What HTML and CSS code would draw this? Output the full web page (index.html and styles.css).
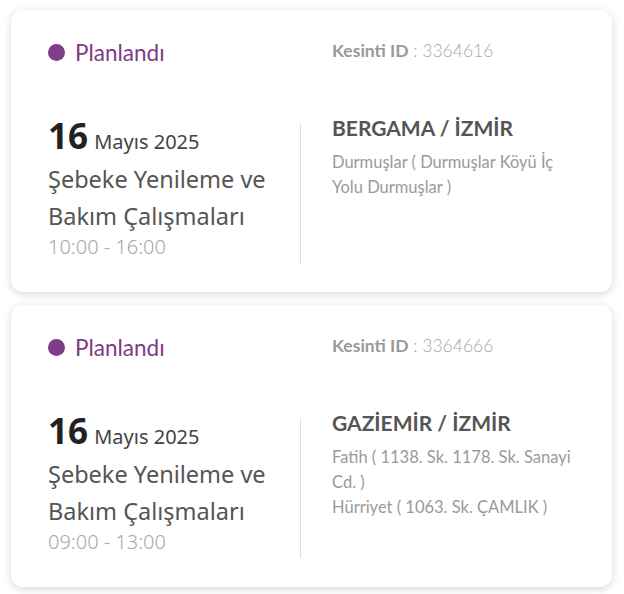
FILE: index.html
```html
<!DOCTYPE html>
<html lang="tr">
<head>
<meta charset="utf-8">
<link rel="stylesheet" href="styles.css">
</head>
<body>
<div class="list">
  <div class="card card-prev"></div>
  <div class="card">
    <div class="top">
      <div class="status"><span class="dot"></span><span class="status-text">Planlandı</span></div>
      <div class="kid"><b>Kesinti ID</b> : 3364616</div>
    </div>
    <div class="body">
      <div class="left">
        <div class="date"><span class="day">16</span> <span class="month">Mayıs 2025</span></div>
        <div class="title">Şebeke Yenileme ve Bakım Çalışmaları</div>
        <div class="time">10:00 - 16:00</div>
      </div>
      <div class="right">
        <div class="place">BERGAMA / İZMİR</div>
        <div class="addr">Durmuşlar ( Durmuşlar Köyü İç Yolu Durmuşlar )</div>
      </div>
    </div>
  </div>
  <div class="card">
    <div class="top">
      <div class="status"><span class="dot"></span><span class="status-text">Planlandı</span></div>
      <div class="kid"><b>Kesinti ID</b> : 3364666</div>
    </div>
    <div class="body">
      <div class="left">
        <div class="date"><span class="day">16</span> <span class="month">Mayıs 2025</span></div>
        <div class="title">Şebeke Yenileme ve Bakım Çalışmaları</div>
        <div class="time">09:00 - 13:00</div>
      </div>
      <div class="right">
        <div class="place">GAZİEMİR / İZMİR</div>
        <div class="addr">Fatih ( 1138. Sk. 1178. Sk. Sanayi Cd. )</div>
        <div class="addr">Hürriyet ( 1063. Sk. ÇAMLIK )</div>
      </div>
    </div>
  </div>
</div>
</body>
</html>
```
FILE: styles.css
```css
html, body {
  margin: 0;
  padding: 0;
  background: #fff;
}
body {
  overflow: hidden;
  height: 594px;
}
.list {
  display: flex;
  flex-direction: column;
  gap: 13px;
  padding: 0 12px 0 11px;
  margin-top: -3px;
}
.card {
  background: #fff;
  border-radius: 12px;
  box-shadow: 0 2px 8px rgba(0, 0, 0, 0.16);
  padding: 31px 30px 29px 37px;
}
.card-prev {
  height: 0;
  padding: 0;
}
.top {
  display: flex;
  align-items: center;
  height: 22px;
}
.status {
  width: 284px;
  display: flex;
  align-items: center;
  gap: 10px;
}
.dot {
  width: 17px;
  height: 17px;
  border-radius: 50%;
  background: #813b8b;
}
.status-text {
  font-family: Lato, "Noto Sans", sans-serif;
  font-size: 22.5px;
  color: #7e3a87;
}
.kid {
  font-family: Lato, "Noto Sans", sans-serif;
  font-size: 17.5px;
  color: #a8a8a8;
  font-weight: 300;
  margin-top: -4px;
}
.kid b {
  font-weight: 700;
  color: #999;
}
.body {
  display: flex;
  margin-top: 61px;
}
.left {
  width: 252px;
  border-right: 1px solid #ddd;
  height: 139px;
  font-family: "Noto Sans", sans-serif;
}
.date {
  line-height: 28px;
  margin-top: -2px;
}
.day {
  font-size: 35px;
  font-weight: 700;
  color: #222;
}
.month {
  font-size: 20px;
  color: #444;
  margin-left: 2px;
}
.title {
  font-size: 23.5px;
  color: #555;
  line-height: 37px;
  width: 240px;
  margin-top: 4px;
}
.time {
  font-size: 20px;
  font-weight: 300;
  color: #a8a8a8;
  line-height: 24px;
}
.right {
  padding-left: 31px;
  font-family: Lato, "Noto Sans", sans-serif;
  width: 240px;
}
.place {
  font-size: 21px;
  font-weight: 700;
  color: #555;
  line-height: 26px;
  margin-top: -9px;
  margin-bottom: 9px;
}
.addr {
  font-size: 16.5px;
  color: #9a9a9a;
  line-height: 25px;
}
```
